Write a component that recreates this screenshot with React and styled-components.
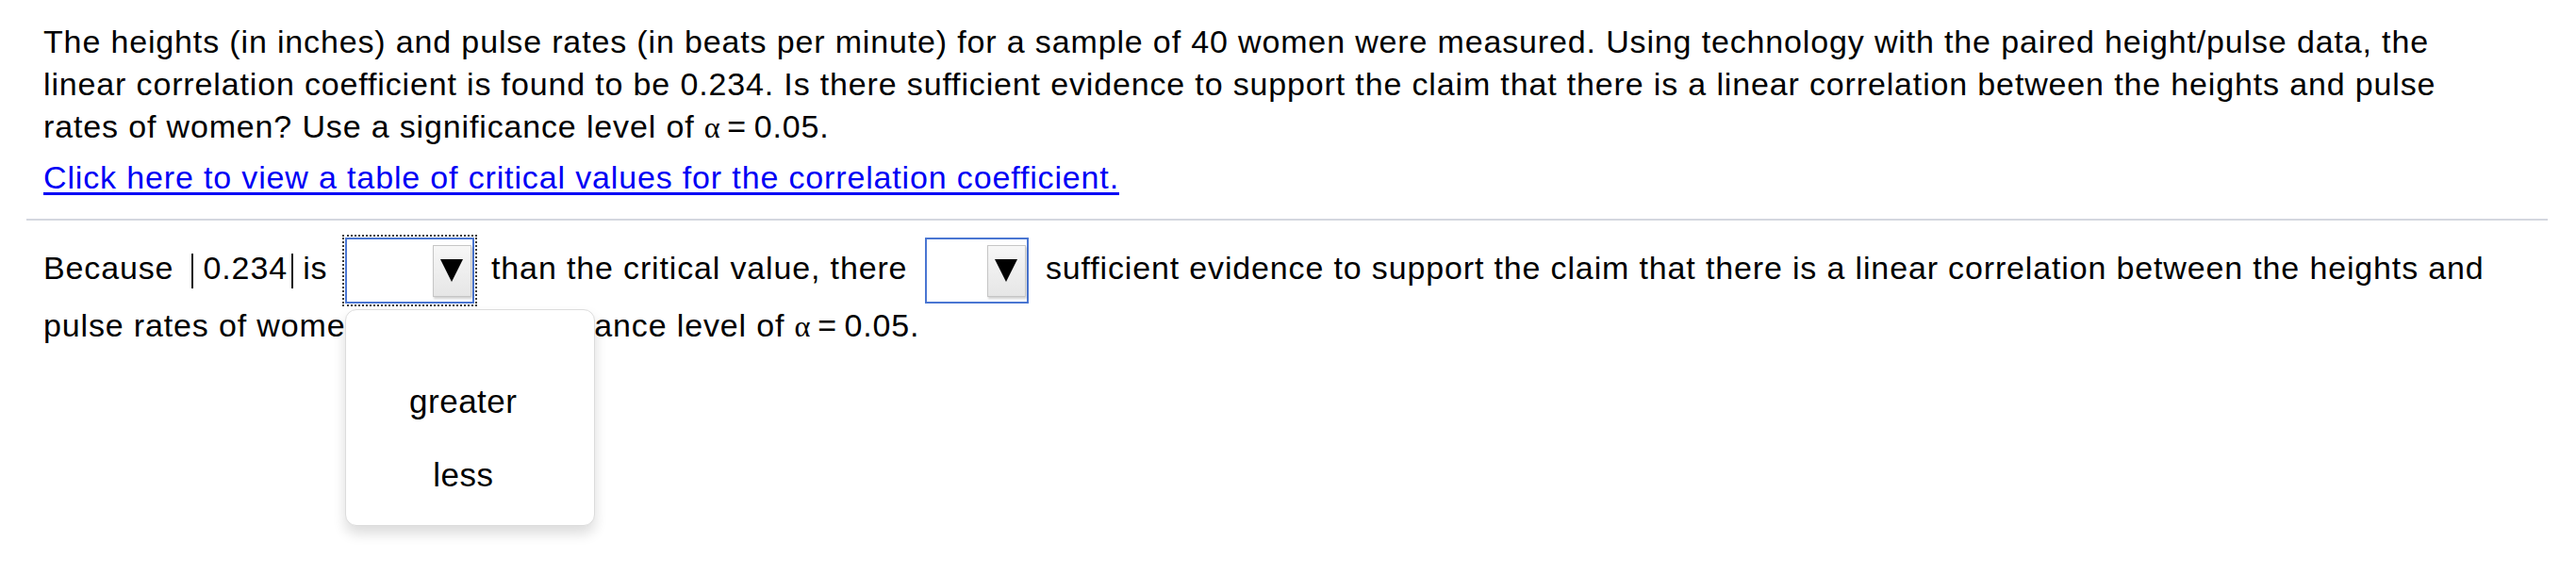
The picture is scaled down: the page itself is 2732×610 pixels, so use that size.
import React from "react";
import styled, { createGlobalStyle } from "styled-components";

const GlobalStyle = createGlobalStyle`
  html, body {
    margin: 0;
    background: #fff;
  }
  body {
    font-family: "Liberation Sans", Arial, Helvetica, sans-serif;
    color: #000;
  }
`;

const Page = styled.div`
  box-sizing: border-box;
  min-height: 100vh;
  padding: 22px 30px 0 28px;
`;

const Question = styled.div`
  padding-left: 18px;
  font-size: 34px;
  letter-spacing: 0.85px;
  line-height: 45px;
`;

const TableLink = styled.a`
  display: inline-block;
  margin-top: 8px;
  color: #0000f5;
  text-decoration: underline;
  text-underline-offset: 4px;
  cursor: pointer;
`;

const Divider = styled.div`
  height: 2px;
  margin-top: 21px;
  background: #d4d7df;
`;

const Answer = styled.div`
  padding-left: 18px;
  margin-top: 17px;
  font-size: 34px;
  letter-spacing: 0.85px;
  line-height: 45px;
`;

const Alpha = styled.span`
  font-family: "Liberation Serif", "Times New Roman", serif;
  font-size: 0.95em;
  letter-spacing: 0;
`;

const AbsValue = styled.span`
  display: inline-block;
  margin-left: 8px;
  padding: 0 4px 6px 11px;
  line-height: 31px;
  border-left: 2px solid #111;
  border-right: 2px solid #111;
`;

const Dropdown = styled.span`
  position: relative;
  display: inline-flex;
  justify-content: flex-end;
  align-items: center;
  box-sizing: border-box;
  width: ${(p) => p.$width}px;
  height: 70px;
  margin: 1px 8px;
  vertical-align: middle;
  border: 2px solid #4a76d2;
  background: #fff;
  outline: ${(p) => (p.$focused ? "2px dotted #3a3a3a" : "none")};
  outline-offset: 1px;
`;

const ArrowButton = styled.span`
  display: flex;
  justify-content: center;
  align-items: center;
  box-sizing: border-box;
  width: 41px;
  height: 55px;
  margin-right: 1px;
  border: 1px solid #c6c6c6;
  background: linear-gradient(#f7f7f7, #e6e6e6);
  box-shadow: 1px 2px 2px rgba(0, 0, 0, 0.18);
`;

const Triangle = styled.span`
  width: 0;
  height: 0;
  border-left: 12px solid transparent;
  border-right: 12px solid transparent;
  border-top: 24px solid #000;
`;

const Menu = styled.div`
  position: absolute;
  top: calc(100% + 8px);
  left: -2px;
  z-index: 2;
  box-sizing: border-box;
  width: 265px;
  height: 230px;
  display: flex;
  flex-direction: column;
  align-items: center;
  padding: 74px 14px 0 0;
  gap: 33px;
  background: #fff;
  border: 1px solid #dcdcdc;
  border-radius: 12px;
  box-shadow: 0 8px 14px rgba(0, 0, 0, 0.14);
`;

const Option = styled.div`
  font-size: 35px;
  letter-spacing: 0.5px;
  line-height: 45px;
  color: #000;
`;

function Select({ width, focused, options }) {
  return (
    <Dropdown $width={width} $focused={focused}>
      <ArrowButton>
        <Triangle />
      </ArrowButton>
      {options && (
        <Menu>
          {options.map((o) => (
            <Option key={o}>{o}</Option>
          ))}
        </Menu>
      )}
    </Dropdown>
  );
}

export default function App() {
  return (
    <>
      <GlobalStyle />
      <Page>
        <Question>
          The heights (in inches) and pulse rates (in beats per minute) for a sample of 40 women were
          measured. Using technology with the paired height/pulse data, the
          <br />
          linear correlation coefficient is found to be 0.234. Is there sufficient evidence to support the
          claim that there is a linear correlation between the heights and pulse
          <br />
          rates of women? Use a significance level of <Alpha>α</Alpha>{"\u2009=\u20090.05."}
          <br />
          <TableLink>Click here to view a table of critical values for the correlation coefficient.</TableLink>
        </Question>
        <Divider />
        <Answer>
          Because <AbsValue>0.234</AbsValue> is{" "}
          <Select width={137} focused options={["greater", "less"]} />{" "}
          than the critical value, there{" "}
          <Select width={110} />{" "}
          sufficient evidence to support the claim that there is a linear correlation between the heights and
          <br />
          pulse rates of women? Use a significance level of <Alpha>α</Alpha>{"\u2009=\u20090.05."}
        </Answer>
      </Page>
    </>
  );
}
